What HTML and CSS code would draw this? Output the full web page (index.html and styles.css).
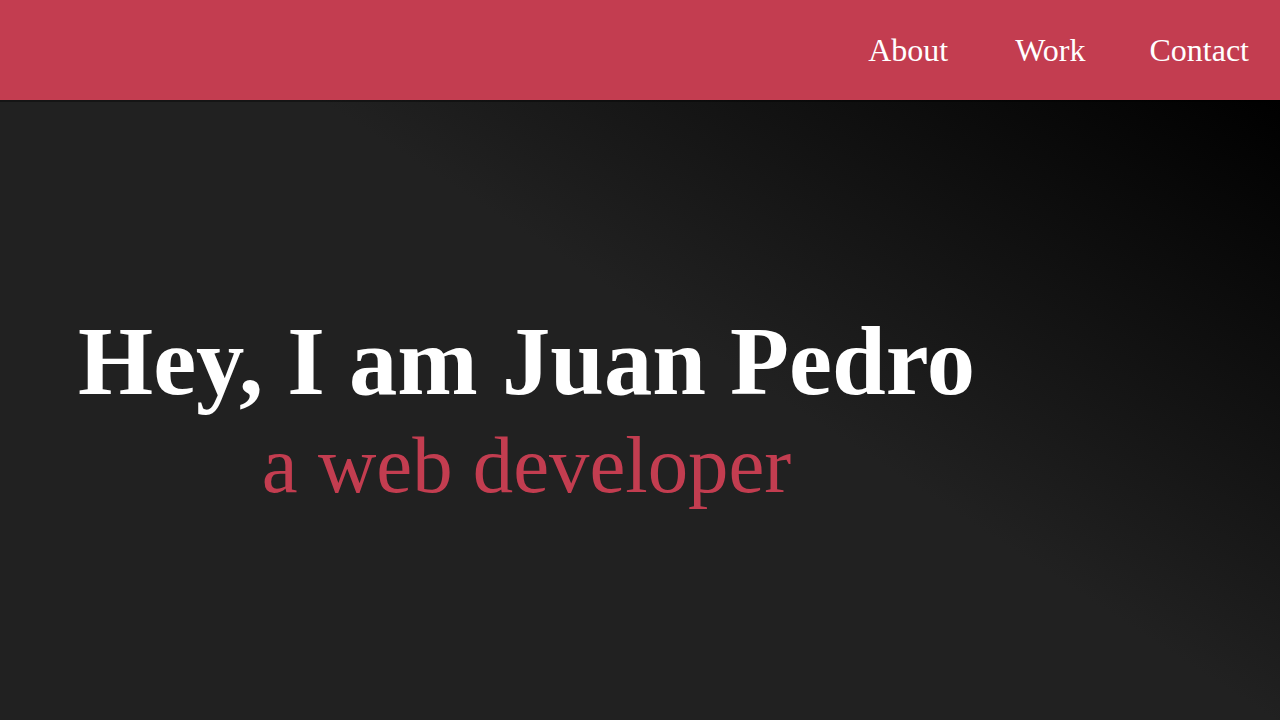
FILE: index.html
```html
<!DOCTYPE html>
<html lang="en">
<head>
<meta charset="utf-8">
<title>Juan Pedro</title>
<link rel="stylesheet" href="styles.css">
</head>
<body>
<nav class="navbar">
  <ul class="nav-list">
    <li><a class="nav-link" href="#about">About</a></li>
    <li><a class="nav-link" href="#work">Work</a></li>
    <li><a class="nav-link" href="#contact">Contact</a></li>
  </ul>
</nav>
<section class="welcome">
  <div class="welcome-text">
    <h1 class="title">Hey, I am Juan Pedro</h1>
    <p class="subtitle">a web developer</p>
  </div>
</section>
</body>
</html>
```
FILE: styles.css
```css
* { box-sizing: border-box; }
html, body {
  margin: 0;
  padding: 0;
  height: 100%;
}
body {
  font-family: "Liberation Serif", "Times New Roman", serif;
  background: #000;
  color: #fff;
  overflow: hidden;
}
.navbar {
  height: 100px;
  background: #c33d50;
  display: flex;
  justify-content: flex-end;
  align-items: center;
  position: relative;
  z-index: 2;
  box-shadow: 0 2px 0 rgba(0, 0, 0, 0.35);
}
.nav-list {
  list-style: none;
  margin: 0;
  padding: 0 0 1px 0;
  display: flex;
}
.nav-link {
  display: block;
  padding: 0 31px 0 33px;
  font-size: 32px;
  line-height: 1;
  color: #fff;
  text-decoration: none;
}
.nav-list li:first-child .nav-link {
  padding-left: 0;
  margin-right: 3px;
}
.welcome {
  height: calc(100vh - 100px);
  display: flex;
  align-items: center;
  padding-left: 78px;
  background: linear-gradient(33deg, #212121 57%, #000 100%);
}
.welcome-text {
  display: flex;
  flex-direction: column;
  align-items: center;
  gap: 14px;
}
.title {
  margin: 0;
  font-size: 96.6px;
  line-height: 1;
  font-weight: 700;
  color: #fff;
}
.subtitle {
  margin: 0;
  font-size: 80.8px;
  line-height: 1;
  color: #c33d50;
}
```
